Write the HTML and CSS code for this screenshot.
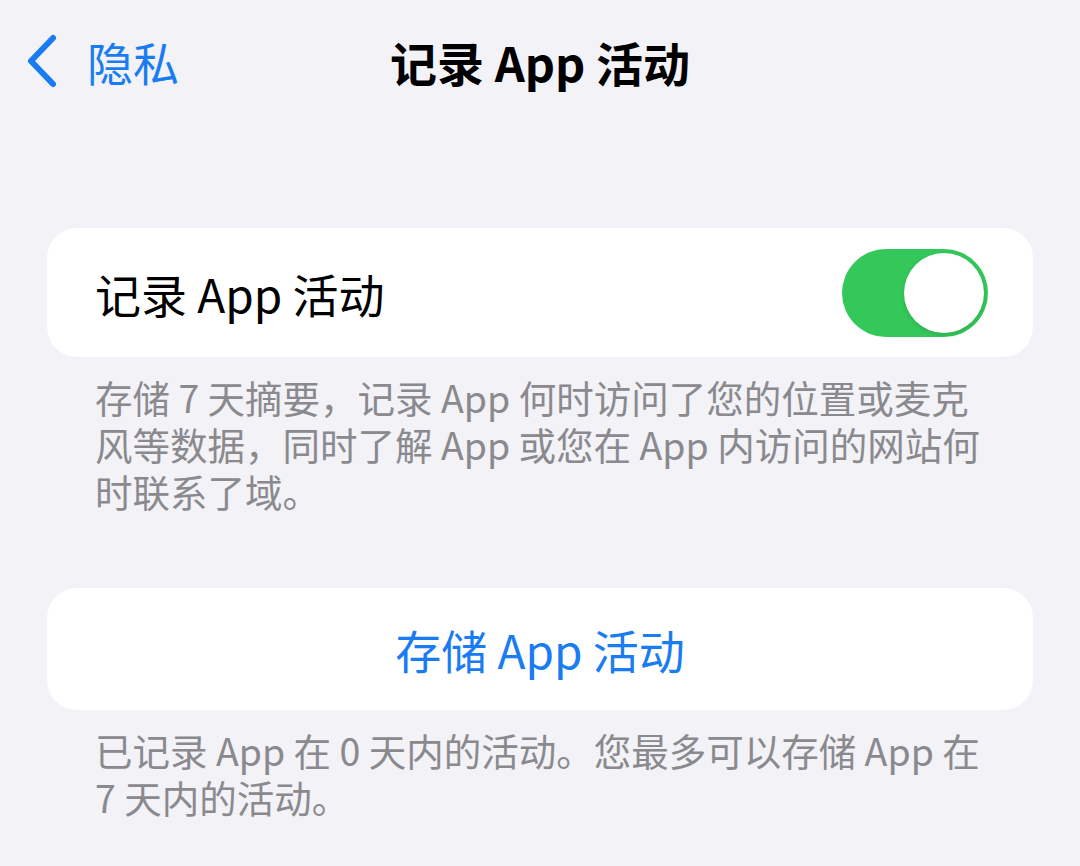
FILE: index.html
```html
<!DOCTYPE html>
<html lang="zh-CN">
<head>
    <meta charset="UTF-8">
    <meta name="viewport" content="width=device-width, initial-scale=1.0">
    <title>记录 App 活动</title>
    <link rel="stylesheet" href="styles.css">
</head>
<body>
    <div class="nav-bar">
        <div class="nav-back">
            <svg class="back-icon" width="40" height="56" viewBox="0 0 40 56">
                <path d="M30 5 L8 28 L30 51" fill="none" stroke="#1a7cf2" stroke-width="6" stroke-linecap="round" stroke-linejoin="round"/>
            </svg>
            <span class="back-label">隐私</span>
        </div>
        <div class="nav-title">记录 App 活动</div>
        <div></div>
    </div>

    <div class="group first-group">
        <div class="card toggle-row">
            <span class="row-label">记录 App 活动</span>
            <div class="switch on">
                <div class="knob"></div>
            </div>
        </div>
        <p class="footnote">存储 7 天摘要，记录 App 何时访问了您的位置或麦克风等数据，同时了解 App 或您在 App 内访问的网站何时联系了域。</p>
    </div>

    <div class="group">
        <div class="card button-row">
            <span class="action-label">存储 App 活动</span>
        </div>
        <p class="footnote">已记录 App 在 0 天内的活动。您最多可以存储 App 在 7 天内的活动。</p>
    </div>
</body>
</html>
```

FILE: styles.css
```css
body {
    margin: 0;
    font-family: "Noto Sans CJK SC", "Noto Sans", sans-serif;
    background-color: #f2f2f7;
    color: #000;
    overflow: hidden;
}

.nav-bar {
    display: grid;
    grid-template-columns: 1fr auto 1fr;
    align-items: center;
    height: 122px;
    padding-bottom: 8px;
}

.nav-back {
    display: flex;
    align-items: center;
    gap: 24px;
    padding-left: 23px;
    color: #1a7cf2;
}

.back-icon {
    display: block;
}

.back-label {
    font-size: 46px;
    line-height: 1;
}

.nav-title {
    font-size: 47px;
    font-weight: 700;
    line-height: 1;
}

.group {
    margin: 0 47px;
}

.first-group {
    margin-top: 98px;
    margin-bottom: 74px;
}

.card {
    background-color: #fff;
    border-radius: 30px;
    display: flex;
    align-items: center;
}

.toggle-row {
    height: 129px;
    justify-content: space-between;
    padding: 0 45px 0 48px;
}

.row-label {
    font-size: 46px;
}

.switch {
    width: 146px;
    height: 88px;
    border-radius: 44px;
    background-color: #e9e9eb;
    position: relative;
}

.switch.on {
    background-color: #34c759;
}

.knob {
    position: absolute;
    top: 4px;
    right: 4px;
    width: 80px;
    height: 80px;
    border-radius: 50%;
    background-color: #fff;
    box-shadow: 0 2px 4px rgba(0, 0, 0, 0.12);
}

.button-row {
    height: 122px;
    justify-content: center;
}

.action-label {
    font-size: 46px;
    color: #1a7cf2;
}

.footnote {
    margin: 16px 0 0;
    padding: 0 43px 0 48px;
    font-size: 37.5px;
    line-height: 47px;
    color: #8a8a8e;
}
```
